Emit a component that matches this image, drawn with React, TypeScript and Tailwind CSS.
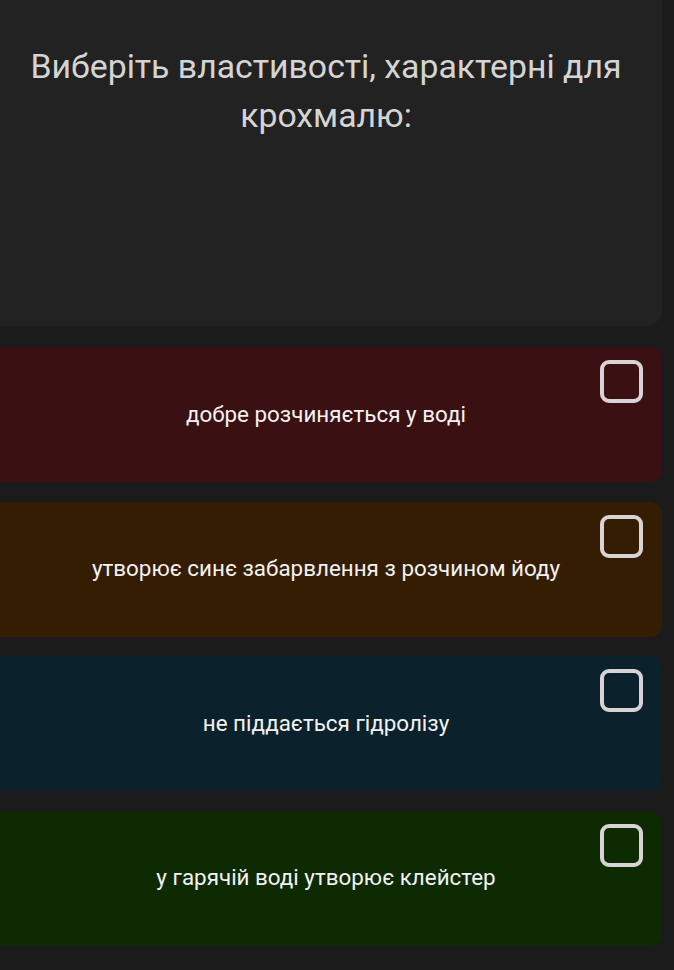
import React from "react";

const options = [
  { text: "добре розчиняється у воді", bg: "bg-[#3a1012]" },
  { text: "утворює синє забарвлення з розчином йоду", bg: "bg-[#351d03]" },
  { text: "не піддається гідролізу", bg: "bg-[#0b222c]" },
  { text: "у гарячій воді утворює клейстер", bg: "bg-[#0e2a03]" },
];

export default function App() {
  return (
    <div
      className="min-h-[970px] w-[674px] bg-[#1b1b1b] pr-3"
      style={{ fontFamily: "Roboto, 'Noto Sans', sans-serif" }}
    >
      <div className="h-[326px] rounded-br-2xl bg-[#222222] pl-[8px] pr-[18px] pt-[42px] text-center">
        <p className="text-[33.8px] leading-[49px] text-[#d4d4d4]">
          Виберіть властивості, характерні для крохмалю:
        </p>
      </div>
      <div className="mt-[21px] flex flex-col gap-[19.5px]">
        {options.map((o) => (
          <div
            key={o.text}
            className={`relative flex h-[135px] items-center justify-center rounded-r-xl pr-[10px] ${o.bg}`}
          >
            <span className="text-[22.4px] text-[#f2f2f2]">{o.text}</span>
            <div className="absolute right-[19px] top-[13px] h-[43px] w-[43px] rounded-[9px] border-[4px] border-[#d8d4d6]" />
          </div>
        ))}
      </div>
    </div>
  );
}
